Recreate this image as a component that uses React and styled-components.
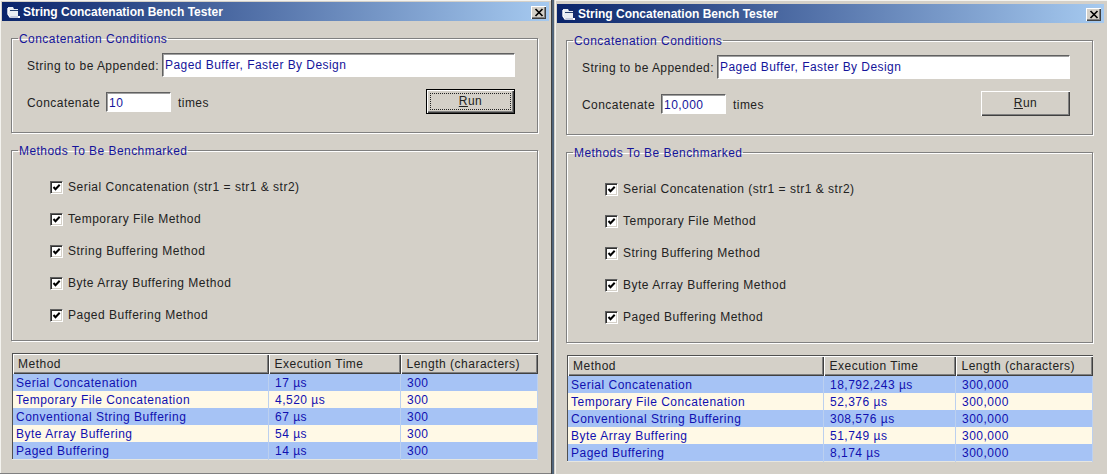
import React from "react";
import styled, { createGlobalStyle } from "styled-components";

const Global = createGlobalStyle`
  html, body { margin: 0; padding: 0; background: #d4d0c8; overflow: hidden; }
  body { font-family: "Liberation Sans", Arial, sans-serif; font-size: 12px; letter-spacing: 0.45px; color: #222; }
`;
const Desktop = styled.div`
  display: flex; width: 1107px; height: 474px; overflow: hidden; background: #d4d0c8;
`;
const WindowFrame = styled.section`
  box-sizing: border-box; flex: ${p => p.$grow ? "1 1 auto" : "0 0 551px"}; height: ${p => p.$offset ? "476px" : "474px"};
  padding: ${p => p.$offset ? "4px 3px 0 2px" : "2px 2px 0 2px"};
  border-bottom: 1px solid #808080;
  box-shadow: inset 1px 1px 0 #f4f3ef;
`;
const Divider = styled.div`
  flex: 0 0 4px; background: linear-gradient(90deg, #404040 0 1px, #52657a 1px 3px, #d4d0c8 3px);
`;
const TitleBar = styled.header`
  height: 19px; display: flex; align-items: center; padding: 0 3px 0 4px;
  background: linear-gradient(90deg, #0a246a 0%, #a6caf0 100%);
  color: #fff; font-weight: bold; font-size: 12px; letter-spacing: 0;
`;
const Title = styled.span` flex: 1; margin-left: 3px; `;
const CloseButton = styled.button`
  width: 15px; height: 13px; padding: 0; display: flex; align-items: center; justify-content: center;
  background: #d4d0c8; border: 0; margin-top: 1px;
  box-shadow: inset 1px 1px 0 #fff, inset -1px -1px 0 #404040, inset -2px -2px 0 #808080;
`;
const Group = styled.fieldset`
  margin: ${p => p.$top}px 11px 0 9px; padding: 0; height: ${p => p.$height}px; box-sizing: border-box;
  border: 1px solid #808080; box-shadow: 1px 1px 0 #fff, inset 1px 1px 0 #fff; min-width: 0;
`;
const Legend = styled.legend`
  margin-left: 6px; padding: 2px 1px 0; color: #14149a; font-size: 12px; line-height: 14px; letter-spacing: 0.45px;
`;
const FormRow = styled.div`
  display: flex; align-items: center; height: 24px; padding-left: 15px;
  margin-top: ${p => p.$top}px;
`;
const Label = styled.label` margin-right: ${p => p.$gap}px; margin-left: ${p => p.$lead || 0}px; margin-top: 1px; white-space: nowrap; `;
const TextBox = styled.div`
  box-sizing: border-box; width: ${p => p.$width}px; height: ${p => p.$height}px; padding: ${p => p.$top}px 0 0 2px;
  background: #fff; color: #14149a; line-height: 16px;
  border: 1px solid; border-color: #606060 #fff #fff #606060;
  box-shadow: inset 1px 1px 0 #a0a0a0;
`;
const Spacer = styled.div` flex: 1; `;
const RunButton = styled.button`
  box-sizing: border-box; width: 89px; height: 25px; margin: -2px 22px 0 0; padding: 0; font: inherit; letter-spacing: inherit; color: #222;
  background: #d4d0c8; position: relative;
  border: ${p => p.$focused ? "1px solid #000" : "0"};
  box-shadow: inset 1px 1px 0 #fff, inset -1px -1px 0 #404040, inset -2px -2px 0 #808080;
  &::after {
    content: ""; position: absolute; inset: 3px;
    border: ${p => p.$focused ? "1px dotted #222" : "0"};
  }
  & u { text-underline-offset: 1px; }
`;
const CheckList = styled.div`
  display: flex; flex-direction: column; gap: 16px; padding: 21px 0 0 38px;
`;
const CheckRow = styled.label` display: flex; align-items: center; height: 16px; gap: 5px; white-space: nowrap; letter-spacing: 0.5px; `;
const CheckBox = styled.span`
  box-sizing: border-box; width: 13px; height: 13px; display: flex; background: #fff;
  border: 1px solid; border-color: #606060 #fff #fff #606060; box-shadow: inset 1px 1px 0 #303030, inset -1px -1px 0 #d4d0c8;
`;
const Grid = styled.table`
  margin: 12px 0 0 10px; width: 525px; table-layout: fixed; border-collapse: collapse;
  border-left: 1px solid #505050; border-top: 1px solid #505050; border-bottom: 1px solid #e6e6e0;
  font-size: 12px; line-height: 16px; letter-spacing: 0.5px;
`;
const HeadCell = styled.th`
  box-sizing: border-box; height: 20px; padding: 1px 0 0 ${p => p.$pad}px; font-weight: normal; text-align: left; color: #222;
  background: #d4d0c8; box-shadow: inset 1px 1px 0 #fff, inset -1px -1px 0 #404040, inset -2px -2px 0 #808080;
`;
const Cell = styled.td`
  height: 17px; padding: 1px 0 0 ${p => p.$pad}px; box-sizing: border-box; white-space: nowrap; color: #1010b0;
  background: ${p => p.$odd ? "#a6c3f5" : "#fff9e6"};
  border-right: 1px solid #bcd0ef;
`;

const Check = () => (
  <CheckBox>
    <svg width="11" height="11" viewBox="0 0 11 11"><path d="M2.5 5 L4.5 7.2 L8.7 2.8" fill="none" stroke="#000" strokeWidth="2" /></svg>
  </CheckBox>
);
const FolderIcon = () => (
  <svg width="14" height="14" viewBox="0 0 14 14">
    <path d="M2 2h5l1 2h4v7H4L2 8z" fill="#e8edf2" />
    <path d="M4 5h8v1H4z" fill="#26406e" />
    <path d="M2 3v6l2 3h8" fill="none" stroke="#fff" strokeWidth="1.4" />
    <rect x="12" y="11" width="2" height="2" fill="#fff" />
  </svg>
);

const methods = ["Serial Concatenation (str1 = str1 & str2)", "Temporary File Method", "String Buffering Method", "Byte Array Buffering Method", "Paged Buffering Method"];
const names = ["Serial Concatenation", "Temporary File Concatenation", "Conventional String Buffering", "Byte Array Buffering", "Paged Buffering"];

function BenchWindow({ count, times, length, focused, offset }) {
  return (
    <WindowFrame $offset={offset} $grow={offset}>
      <TitleBar>
        <FolderIcon />
        <Title>String Concatenation Bench Tester</Title>
        <CloseButton aria-label="Close">
          <svg width="10" height="9" viewBox="0 0 10 9"><path d="M1.5 1 L8.5 8 M8.5 1 L1.5 8" stroke="#000" strokeWidth="1.7" /></svg>
        </CloseButton>
      </TitleBar>
      <Group $top={9} $height={103}>
        <Legend>Concatenation Conditions</Legend>
        <FormRow $top={7}>
          <Label $gap={3}>String to be Appended:</Label>
          <TextBox $width={353} $height={24} $top={3}>Paged Buffer, Faster By Design</TextBox>
        </FormRow>
        <FormRow $top={13}>
          <Label $gap={6}>Concatenate</Label>
          <TextBox $width={65} $height={20} $top={2}>{count}</TextBox>
          <Label as="span" $gap={0} $lead={7}>times</Label>
          <Spacer />
          <RunButton $focused={focused}><u>R</u>un</RunButton>
        </FormRow>
      </Group>
      <Group $top={9} $height={199}>
        <Legend>Methods To Be Benchmarked</Legend>
        <CheckList>
          {methods.map(m => <CheckRow key={m}><Check />{m}</CheckRow>)}
        </CheckList>
      </Group>
      <Grid>
        <colgroup><col width="256" /><col width="132" /><col width="137" /></colgroup>
        <thead>
          <tr>
            <HeadCell $pad={5}>Method</HeadCell>
            <HeadCell $pad={6}>Execution Time</HeadCell>
            <HeadCell $pad={6}>Length (characters)</HeadCell>
          </tr>
        </thead>
        <tbody>
          {names.map((n, i) => (
            <tr key={n}>
              <Cell $odd={i % 2 === 0} $pad={3}>{n}</Cell>
              <Cell $odd={i % 2 === 0} $pad={6}>{times[i]}</Cell>
              <Cell $odd={i % 2 === 0} $pad={6}>{length}</Cell>
            </tr>
          ))}
        </tbody>
      </Grid>
    </WindowFrame>
  );
}

export default function App() {
  return (
    <Desktop>
      <Global />
      <BenchWindow count="10" focused length="300" times={["17 µs", "4,520 µs", "67 µs", "54 µs", "14 µs"]} />
      <Divider />
      <BenchWindow offset count="10,000" length="300,000" times={["18,792,243 µs", "52,376 µs", "308,576 µs", "51,749 µs", "8,174 µs"]} />
    </Desktop>
  );
}
